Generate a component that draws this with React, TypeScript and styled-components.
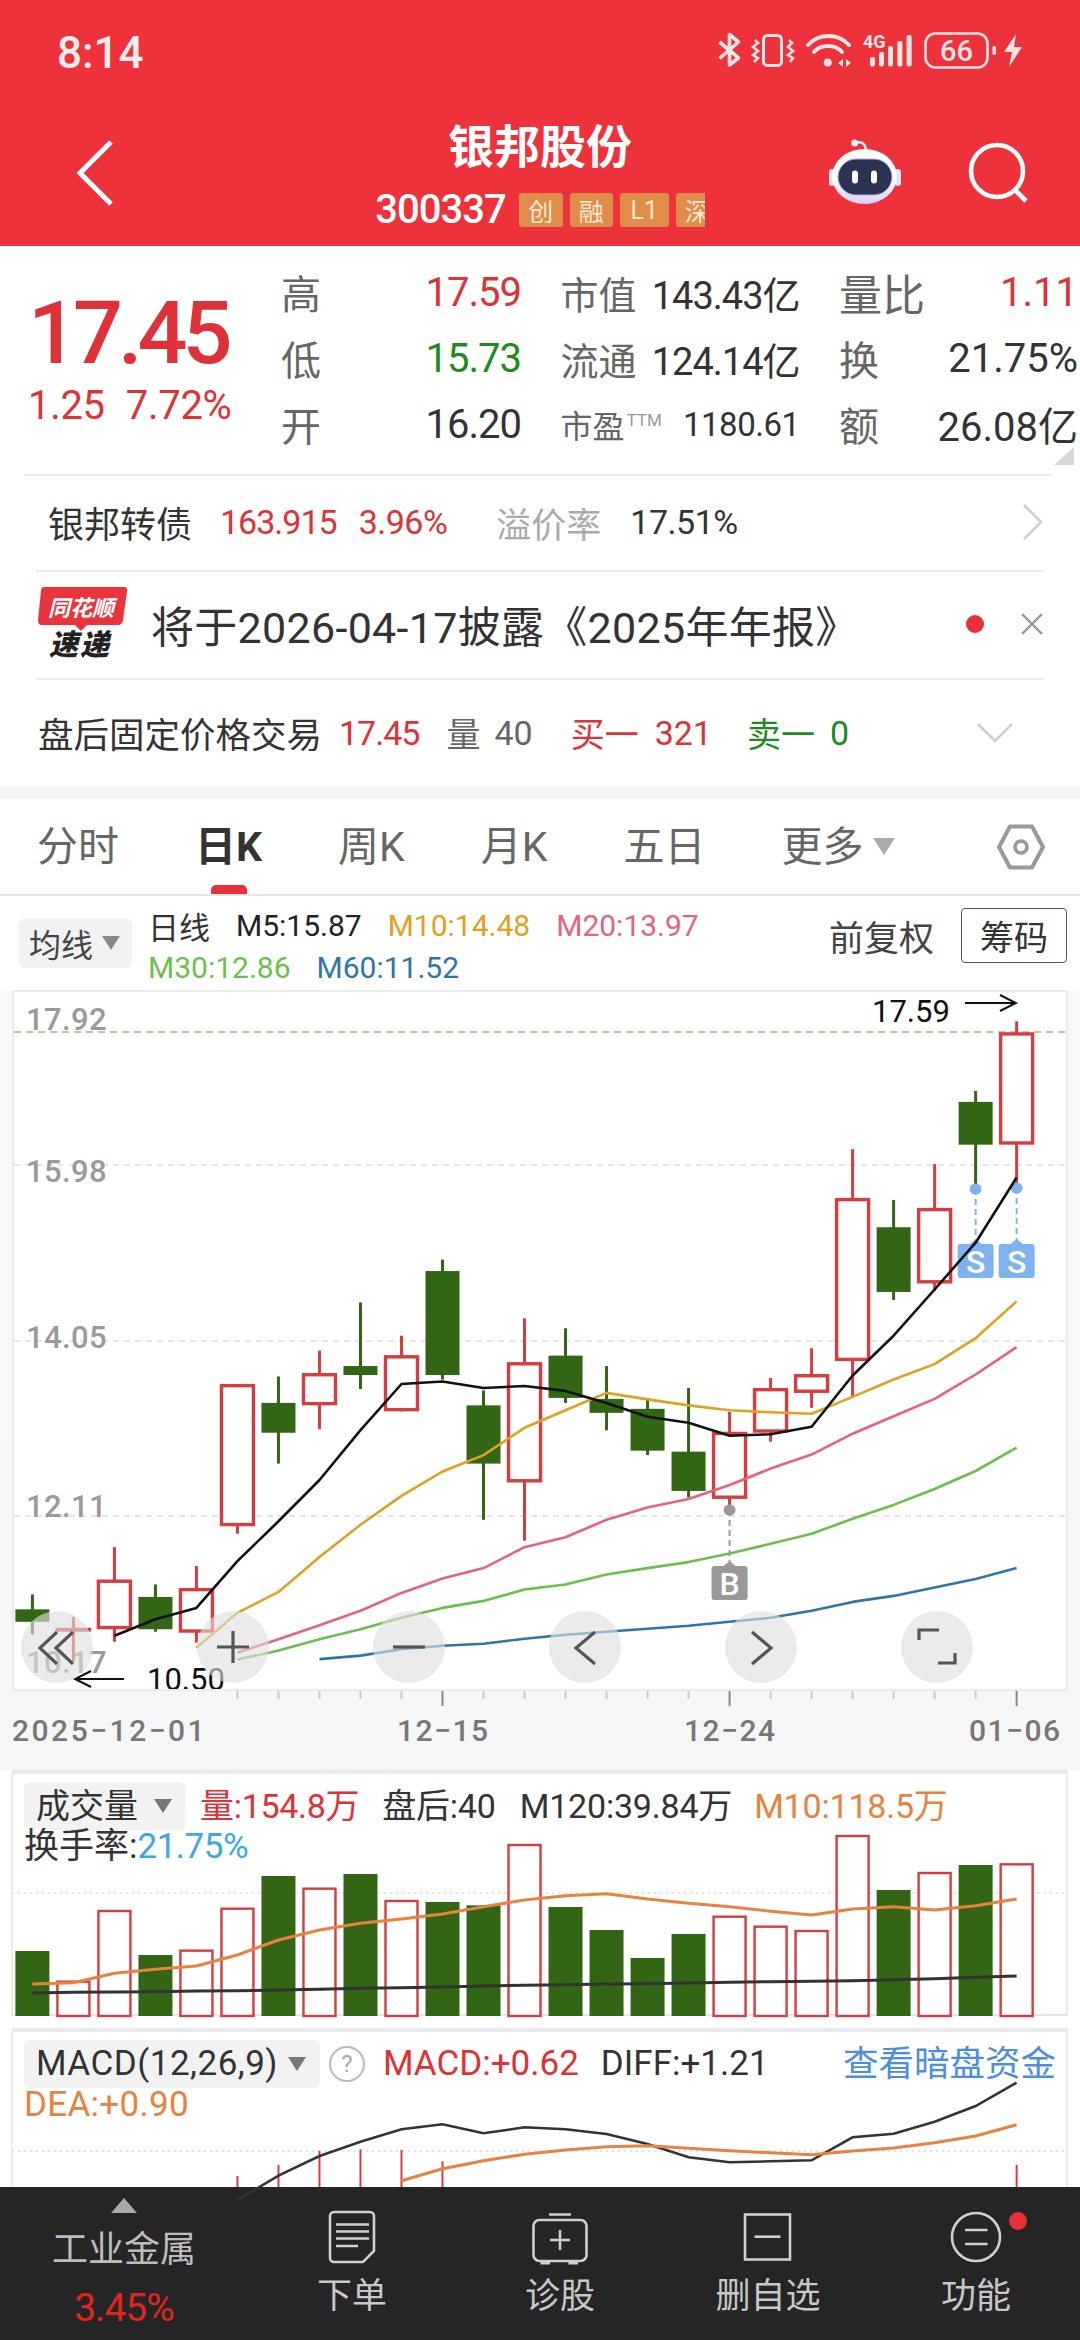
import React from "react";
import styled, { createGlobalStyle } from "styled-components";

const RED = "#DC3238";
const GREEN = "#1C8C1C";
const CANDLE_RED = "#D63C40";
const CANDLE_GREEN = "#336614";

const GlobalStyle = createGlobalStyle`
  html, body { margin: 0; padding: 0; background: #fff; }
  body { font-family: Roboto, "Noto Sans CJK SC", sans-serif; }
`;

const Page = styled.div`
  width: 1080px;
  height: 2340px;
  display: flex;
  flex-direction: column;
  overflow: hidden;
  background: #fff;
  color: #333;
`;

/* header */
const Header = styled.header`
  height: 246px;
  flex: none;
  background: #ee323b;
  color: #fff;
`;
const StatusBar = styled.div`
  height: 102px;
  display: flex;
  justify-content: space-between;
  align-items: flex-start;
  padding: 20px 40px 0 57px;
  box-sizing: border-box;
`;
const Clock = styled.div`
  font-size: 44px;
  line-height: 60px;
  margin-top: 3px;
  font-weight: 500;
  color: #ffecec;
`;
const TitleRow = styled.div`
  height: 144px;
  display: grid;
  grid-template-columns: 250px 1fr 250px;
`;
const BackCell = styled.div`
  display: flex;
  align-items: center;
  padding: 0 0 2px 74px;
`;
const TitleCell = styled.div`
  display: flex;
  flex-direction: column;
  align-items: center;
  padding-top: 16px;
`;
const Title = styled.div`
  font-size: 46px;
  line-height: 58px;
  font-weight: 700;
`;
const SubRow = styled.div`
  display: flex;
  align-items: center;
  margin-top: 14px;
`;
const Code = styled.span`
  font-size: 40px;
  line-height: 40px;
  font-weight: 500;
  margin-right: 13px;
  letter-spacing: -1px;
`;
const Badge = styled.span<{ $w: number; $clip?: boolean }>`
  width: ${(p) => p.$w}px;
  height: 34px;
  margin-right: 7px;
  display: flex;
  align-items: center;
  justify-content: ${(p) => (p.$clip ? "flex-start" : "center")};
  padding-left: ${(p) => (p.$clip ? 9 : 0)}px;
  box-sizing: border-box;
  overflow: hidden;
  background: #e28c49;
  border-radius: ${(p) => (p.$clip ? "3px 0 0 3px" : "3px")};
  color: #fbe9d4;
  font-size: 25px;
  white-space: nowrap;
  flex: none;
  &:last-child { margin-right: 0; }
`;
const HeadActions = styled.div`
  display: flex;
  align-items: center;
  justify-content: flex-end;
  gap: 66px;
  padding: 0 50px 2px 0;
`;

/* generic text run */
const Txt = styled.span<{ $c?: string; $s?: number; $ml?: number; $ls?: number; $w?: number }>`
  color: ${(p) => p.$c ?? "inherit"};
  font-size: ${(p) => p.$s ?? 34}px;
  margin-left: ${(p) => p.$ml ?? 0}px;
  letter-spacing: ${(p) => p.$ls ?? 0}px;
  font-weight: ${(p) => p.$w ?? 400};
  white-space: nowrap;
`;

/* quote block */
const Quote = styled.section`
  height: 228px;
  flex: none;
  display: flex;
  padding-top: 13px;
  box-sizing: border-box;
  margin: 0 27px 0 0;
  position: relative;
`;
const PriceCol = styled.div`
  width: 281px;
  flex: none;
  padding: 28px 0 0 28px;
  box-sizing: border-box;
`;
const BigPrice = styled.div`
  font-size: 88px;
  line-height: 92px;
  font-weight: 500;
  color: ${RED};
  letter-spacing: -5px;
`;
const PriceChange = styled.div`
  display: flex;
  gap: 21px;
  margin-top: 5px;
  font-size: 40px;
  line-height: 44px;
  color: ${RED};
  letter-spacing: -0.3px;
`;
const QuoteGrid = styled.div`
  display: grid;
  grid-template-columns: 240px 239px 239px;
  grid-auto-rows: 66px;
  column-gap: 39.5px;
  flex: none;
`;
const QuoteCell = styled.div`
  display: flex;
  align-items: center;
  justify-content: space-between;
  white-space: nowrap;
`;
const Corner = styled.div`
  position: absolute;
  right: -21px;
  bottom: 9px;
  width: 0;
  height: 0;
  border-left: 20px solid transparent;
  border-bottom: 18px solid #d8d8d8;
`;
const Ttm = styled.sup`
  font-size: 17px;
  color: #999;
  vertical-align: 12px;
  line-height: 0;
  margin-left: 2px;
`;

/* list rows */
const Row = styled.div<{ $h: number; $pl: number; $pr: number; $line?: boolean }>`
  height: ${(p) => p.$h}px;
  flex: none;
  display: flex;
  align-items: center;
  box-sizing: border-box;
  padding: 0 ${(p) => p.$pr}px 0 ${(p) => p.$pl}px;
  position: relative;
  &::before {
    content: "";
    display: ${(p) => (p.$line ? "block" : "none")};
    position: absolute;
    left: ${(p) => (p.$pl > 40 ? 24 : 36)}px;
    right: ${(p) => (p.$pl > 40 ? 27 : 36)}px;
    top: 0;
    height: 2px;
    background: #ececec;
  }
`;
const Push = styled.div`
  margin-left: auto;
  display: flex;
  align-items: center;
`;
const Dot = styled.span`
  width: 18px;
  height: 18px;
  border-radius: 50%;
  background: #e8303a;
  margin-right: 36px;
`;
const Band = styled.div`
  height: 12px;
  flex: none;
  background: #f5f5f5;
`;

/* period tabs */
const Tabs = styled.nav`
  height: 97px;
  flex: none;
  display: flex;
  align-items: center;
  gap: 76px;
  padding: 0 34px 0 37px;
  box-sizing: border-box;
  border-bottom: 2px solid #e6e6e6;
  position: relative;
`;
const Tab = styled.span<{ $active?: boolean }>`
  font-size: 41px;
  line-height: 50px;
  color: ${(p) => (p.$active ? "#333" : "#666")};
  font-weight: ${(p) => (p.$active ? 700 : 400)};
  position: relative;
  display: flex;
  align-items: center;
  white-space: nowrap;
  &::after {
    content: "";
    display: ${(p) => (p.$active ? "block" : "none")};
    position: absolute;
    left: 16px;
    bottom: -22px;
    width: 36px;
    height: 9px;
    border-radius: 5px 5px 0 0;
    background: #e8303a;
  }
`;
const Caret = styled.span<{ $size?: number; $ml?: number; $c?: string }>`
  display: inline-block;
  width: 0;
  height: 0;
  margin-left: ${(p) => p.$ml ?? 8}px;
  border-left: ${(p) => p.$size ?? 10}px solid transparent;
  border-right: ${(p) => p.$size ?? 10}px solid transparent;
  border-top: ${(p) => (p.$size ?? 10) * 1.6}px solid ${(p) => p.$c ?? "#aaa"};
  flex: none;
`;
const UpCaret = styled.span`
  width: 0;
  height: 0;
  border-left: 13px solid transparent;
  border-right: 13px solid transparent;
  border-bottom: 15px solid #aaa;
  flex: none;
`;

/* indicator toolbar */
const Toolbar = styled.div`
  height: 94px;
  flex: none;
  display: flex;
  align-items: flex-start;
  padding: 0 13px 0 19px;
  box-sizing: border-box;
`;
const Picker = styled.div<{ $w: number }>`
  width: ${(p) => p.$w}px;
  height: 50px;
  flex: none;
  display: flex;
  align-items: center;
  justify-content: space-between;
  padding: 0 12px 0 10px;
  box-sizing: border-box;
  margin-top: 22px;
  background: #f2f2f2;
  border-radius: 6px;
  font-size: 32px;
  color: #444;
  white-space: nowrap;
`;
const MaLegend = styled.div`
  margin: 8px 0 0 16px;
  display: flex;
  flex-direction: column;
`;
const MaLine = styled.div`
  display: flex;
  gap: 26px;
  height: 42px;
  align-items: center;
  font-size: 30px;
  white-space: nowrap;
`;
const Adjust = styled.div`
  margin: 12px 0 0 auto;
  display: flex;
  align-items: center;
  gap: 27px;
`;
const ChipBtn = styled.div`
  width: 106px;
  height: 55px;
  display: flex;
  align-items: center;
  justify-content: center;
  border: 1.5px solid #555;
  border-radius: 4px;
  box-sizing: border-box;
  font-size: 34px;
`;

/* charts */
const ChartSection = styled.section`
  height: 780px;
  flex: none;
  position: relative;
  background: linear-gradient(#fafafa, #f6f6f6);
`;
const PlainSvg = styled.svg`
  display: block;
  overflow: visible;
`;
const ChartControls = styled.div`
  position: absolute;
  left: 21px;
  top: 621px;
  display: flex;
  gap: 104px;
`;
const RoundBtn = styled.div`
  width: 72px;
  height: 72px;
  border-radius: 50%;
  background: rgba(222, 222, 222, 0.62);
`;
const SubPanel = styled.section<{ $h: number }>`
  height: ${(p) => p.$h}px;
  flex: none;
  position: relative;
  margin: 0 12px;
  background: #fff;
  border-top: 4px solid #eaeaea;
  box-sizing: border-box;
`;
const PanelLegend = styled.div`
  position: absolute;
  left: 12px;
  top: 8px;
  right: 12px;
`;
const LegendRow = styled.div`
  display: flex;
  align-items: center;
  font-size: 34px;
  line-height: 42px;
  white-space: nowrap;
  & + & { margin-top: -4px; }
`;
const PanelPicker = styled(Picker)`
  margin: 0;
  height: 48px;
  font-size: 34px;
  color: #333;
  padding: 0 14px 0 12px;
`;
const HelpMark = styled.span`
  width: 32px;
  height: 32px;
  margin-left: 9px;
  border: 2px solid #bbb;
  border-radius: 50%;
  display: flex;
  align-items: center;
  justify-content: center;
  font-size: 24px;
  color: #aaa;
  flex: none;
`;

/* bottom bar */
const BottomBar = styled.footer`
  height: 153px;
  flex: none;
  display: grid;
  grid-template-columns: 248px repeat(4, 208px);
  background: #252525;
  color: #c8c8c8;
`;
const SectorCell = styled.div`
  display: flex;
  flex-direction: column;
  align-items: center;
  padding-top: 11px;
  position: relative;
`;
const SectorName = styled.div`
  font-size: 36px;
  line-height: 44px;
  margin-top: 15px;
  color: #bdbdbd;
`;
const SectorPct = styled.div`
  font-size: 39px;
  line-height: 44px;
  margin-top: 14px;
  color: #e0241f;
  letter-spacing: -1px;
`;
const NavItem = styled.div`
  display: flex;
  flex-direction: column;
  align-items: center;
  padding-top: 22px;
  position: relative;
  font-size: 35px;
`;
const NavLabel = styled.div`
  line-height: 44px;
  margin-top: 6px;
`;
const NavDot = styled.span`
  position: absolute;
  left: calc(50% + 33px);
  top: 25px;
  width: 18px;
  height: 18px;
  border-radius: 50%;
  background: #e8303a;
`;

/* chart data: high, body top, body bottom, low */
type Candle = [number, number, number, number, "r" | "g"];
const candles: Candle[] = [
  [1235, 1265, 1290, 1315, "g"],
  [1280, 1302, 1308, 1370, "r"],
  [1140, 1205, 1305, 1330, "r"],
  [1215, 1240, 1305, 1310, "g"],
  [1178, 1222, 1312, 1332, "r"],
  [812, 812, 1098, 1113, "r"],
  [797, 850, 910, 972, "g"],
  [745, 790, 855, 903, "r"],
  [648, 776, 794, 822, "g"],
  [715, 754, 867, 867, "r"],
  [562, 585, 794, 803, "g"],
  [825, 855, 972, 1085, "g"],
  [680, 768, 1010, 1127, "r"],
  [700, 755, 840, 850, "g"],
  [776, 842, 870, 905, "g"],
  [840, 862, 946, 955, "g"],
  [820, 948, 1027, 1040, "g"],
  [868, 908, 1043, 1065, "r"],
  [800, 820, 910, 928, "r"],
  [740, 792, 830, 860, "r"],
  [340, 438, 766, 838, "r"],
  [442, 497, 627, 643, "g"],
  [370, 458, 610, 625, "r"],
  [223, 245, 331, 420, "g"],
  [83, 105, 331, 415, "r"],
];

const cx = (i: number) => 32.4 + 41.01 * i;
const py = (v: number) => 980 + v / 2.01;
const series = (start: number, ys: number[], toY: (v: number) => number) =>
  ys.map((v, i) => `${cx(start + i).toFixed(1)},${toY(v).toFixed(1)}`).join(" ");

const maLines: { color: string; start: number; ys: number[] }[] = [
  {
    color: "#6CBF4B",
    start: 5,
    ys: [1366, 1348, 1325, 1305, 1282, 1262, 1248, 1225, 1215, 1195, 1182, 1170, 1153, 1133, 1113, 1083, 1055, 1023, 987, 940],
  },
  {
    color: "#2F76A8",
    start: 7,
    ys: [1365, 1358, 1345, 1338, 1334, 1324, 1316, 1310, 1304, 1298, 1290, 1282, 1268, 1250, 1238, 1221, 1204, 1182],
  },
  {
    color: "#E8637A",
    start: 5,
    ys: [1352, 1325, 1297, 1268, 1232, 1203, 1182, 1140, 1120, 1085, 1060, 1043, 1015, 982, 954, 912, 877, 842, 793, 738],
  },
  {
    color: "#E0A020",
    start: 4,
    ys: [1342, 1272, 1230, 1160, 1095, 1037, 988, 955, 900, 865, 830, 843, 855, 865, 869, 872, 838, 803, 772, 720, 646],
  },
  {
    color: "#111",
    start: 2,
    ys: [1318, 1285, 1262, 1168, 1088, 1005, 905, 812, 807, 820, 816, 826, 850, 878, 890, 916, 913, 898, 795, 715, 622, 528, 397],
  },
];

const Marker = ({ i, dotY, top, label, color }: { i: number; dotY: number; top: number; label: string; color: string }) => {
  const x = cx(i);
  return (
    <g>
      <ellipse cx={x} cy={dotY} rx={6} ry={5.5} fill={color} />
      <line x1={x} x2={x} y1={dotY} y2={top - 4} stroke={color} strokeWidth={2} strokeDasharray="6 4" />
      <path d={`M${x - 6} ${top}L${x} ${top - 5}L${x + 6} ${top}Z`} fill={color} />
      <rect x={x - 18} y={top} width={36} height={34} rx={3} fill={color} />
      <text x={x} y={top + 29} textAnchor="middle" fontSize={32} fontWeight={500} fill="#fff">
        {label}
      </text>
    </g>
  );
};

const axisLabels: [string, number][] = [
  ["17.92", 1030],
  ["15.98", 1182],
  ["14.05", 1348],
  ["12.11", 1517],
  ["10.17", 1673],
];

const PriceChart = () => (
  <PlainSvg width={1080} height={780} viewBox="0 990 1080 780" fontFamily="Roboto, sans-serif">
    <defs>
      <clipPath id="plot">
        <rect x={12} y={990} width={1056} height={699} />
      </clipPath>
    </defs>
    <rect x={13} y={991} width={1054} height={699} fill="#fff" stroke="#ebebeb" strokeWidth={2} />
    <g strokeWidth={1.5} strokeDasharray="6 5" stroke="#dedede">
      <line x1={14} x2={1066} y1={1165} y2={1165} />
      <line x1={14} x2={1066} y1={1341} y2={1341} />
      <line x1={14} x2={1066} y1={1516} y2={1516} />
    </g>
    <line x1={14} x2={1066} y1={1032} y2={1032} stroke="#c8a878" strokeWidth={1.5} strokeDasharray="7 5" />
    {axisLabels.map(([label, y]) => (
      <text key={label} x={26} y={y} fontSize={31} fontWeight={500} fill="#9a9a9a" letterSpacing={0.4}>
        {label}
      </text>
    ))}
    {candles.map(([high, top, bottom, low, kind], i) => {
      const x = cx(i);
      const color = kind === "r" ? CANDLE_RED : CANDLE_GREEN;
      return (
        <g key={i}>
          <line x1={x} x2={x} y1={py(high)} y2={py(low)} stroke={color} strokeWidth={3} />
          {kind === "r" ? (
            <rect x={x - 16} y={py(top) + 1.7} width={32} height={Math.max(py(bottom) - py(top) - 3.4, 0.5)} fill="#fff" stroke={color} strokeWidth={3.4} />
          ) : (
            <rect x={x - 17} y={py(top)} width={34} height={py(bottom) - py(top)} fill={color} />
          )}
        </g>
      );
    })}
    <Marker i={17} dotY={1510} top={1566} label="B" color="#999" />
    <Marker i={23} dotY={1189} top={1244} label="S" color="#7FB3EE" />
    <Marker i={24} dotY={1188} top={1244} label="S" color="#7FB3EE" />
    {maLines.map((m) => (
      <polyline key={m.color} points={series(m.start, m.ys, py)} fill="none" stroke={m.color} strokeWidth={2.6} strokeLinejoin="round" />
    ))}
    <text x={872} y={1022} fontSize={31} fill="#111">
      17.59
    </text>
    <path d="M965 1003H1016M1000 995L1016 1003L1000 1011" fill="none" stroke="#111" strokeWidth={2} />
    <g clipPath="url(#plot)">
      <text x={147} y={1690} fontSize={31} fill="#111">
        10.50
      </text>
    </g>
    <path d="M124 1679H75M91 1671L75 1679L91 1687" fill="none" stroke="#111" strokeWidth={2} />
    {candles.map((_, i) =>
      i < 5 ? null : (
        <line
          key={i}
          x1={cx(i)}
          x2={cx(i)}
          y1={1691}
          y2={i === 10 || i === 17 || i === 24 ? 1706 : 1699}
          stroke={i === 10 || i === 17 || i === 24 ? "#888" : "#ccc"}
          strokeWidth={2}
        />
      )
    )}
    <g fontSize={30} fontWeight={500} fill="#777" letterSpacing={1.5}>
      <text x={12} y={1741} letterSpacing={2.5}>
        2025−12−01
      </text>
      <text x={397} y={1741}>
        12−15
      </text>
      <text x={684} y={1741}>
        12−24
      </text>
      <text x={969} y={1741}>
        01−06
      </text>
    </g>
  </PlainSvg>
);

const volumes: [number, "r" | "g"][] = [
  [603, "g"], [692, "r"], [480, "r"], [615, "g"], [599, "r"], [473, "r"], [378, "g"], [413, "r"], [372, "g"],
  [450, "r"], [456, "g"], [466, "g"], [282, "r"], [471, "g"], [540, "g"], [624, "g"], [552, "g"], [497, "r"],
  [527, "r"], [540, "r"], [255, "r"], [420, "g"], [366, "r"], [345, "g"], [340, "r"],
];
const volY = (v: number) => 1750 + v / 3;
const volAvg10 = [702, 698, 670, 658, 648, 615, 570, 540, 520, 507, 492, 470, 450, 437, 431, 447, 460, 470, 484, 495, 477, 470, 480, 467, 447];
const volAvg120 = [729, 727, 726, 725, 723, 722, 720, 718, 715, 713, 711, 708, 706, 704, 702, 701, 699, 697, 695, 694, 692, 689, 686, 682, 678];

const VolumeChart = () => (
  <PlainSvg width={1056} height={254} viewBox="12 1774 1056 254">
    <line x1={12} x2={12} y1={1774} y2={2016} stroke="#ececec" strokeWidth={2} />
    <line x1={1067} x2={1067} y1={1774} y2={2016} stroke="#ececec" strokeWidth={2} />
    <line x1={12} x2={1068} y1={2015} y2={2015} stroke="#e6e6e6" strokeWidth={2} />
    <line x1={12} x2={1068} y1={1893} y2={1893} stroke="#dcdcdc" strokeWidth={1.5} strokeDasharray="2 4" />
    {volumes.map(([top, kind], i) => {
      const x = cx(i);
      const y = volY(top);
      return kind === "r" ? (
        <rect key={i} x={x - 16} y={y + 1} width={32} height={2015 - y} fill="#fff" stroke={CANDLE_RED} strokeWidth={2.4} />
      ) : (
        <rect key={i} x={x - 17} y={y} width={34} height={2016 - y} fill={CANDLE_GREEN} />
      );
    })}
    <polyline points={series(0, volAvg120, volY)} fill="none" stroke="#333" strokeWidth={3} />
    <polyline points={series(0, volAvg10, volY)} fill="none" stroke="#E8823F" strokeWidth={3} strokeLinejoin="round" />
  </PlainSvg>
);

const macdY = (v: number) => 2020 + v / 3;
const diffLine = [540, 467, 408, 365, 328, 313, 340, 322, 328, 342, 372, 412, 427, 424, 421, 352, 341, 305, 258, 188];
const deaLine = [482, 446, 422, 403, 390, 380, 377, 385, 392, 398, 404, 393, 384, 368, 348, 314];
const macdBars: [number, number][] = [[5, 468], [6, 435], [7, 393], [8, 388], [9, 390], [10, 424], [24, 435]];

const MacdChart = () => (
  <PlainSvg width={1056} height={155} viewBox="12 2032 1056 155">
    <line x1={12} x2={12} y1={2032} y2={2187} stroke="#ececec" strokeWidth={2} />
    <line x1={1067} x2={1067} y1={2032} y2={2187} stroke="#ececec" strokeWidth={2} />
    <line x1={12} x2={1068} y1={2151} y2={2151} stroke="#dcdcdc" strokeWidth={1.5} strokeDasharray="2 4" />
    {macdBars.map(([i, top]) => (
      <line key={i} x1={cx(i)} x2={cx(i)} y1={macdY(top)} y2={2187} stroke={CANDLE_RED} strokeWidth={2} />
    ))}
    <polyline points={series(5, diffLine.slice(0), macdY)} fill="none" stroke="#333" strokeWidth={2.5} />
    <polyline points={series(9, deaLine, macdY)} fill="none" stroke="#E8823F" strokeWidth={3} />
  </PlainSvg>
);

/* icons */
const StatusIcons = () => (
  <PlainSvg width={340} height={60} viewBox="0 0 340 60" fill="none" stroke="#ffe4e4" fontFamily="Roboto, sans-serif">
    <path d="M19.5 22L38.5 38L29.5 45V14.5L38.5 22L19.5 38.5" strokeWidth={3.6} strokeLinejoin="round" />
    <rect x={63.5} y={15.5} width={18} height={30} rx={4} strokeWidth={3} />
    <path d="M55 20L58 23L53 27L58 31L53 35L58 38L54 42" strokeWidth={2.6} />
    <path d="M89 20L92 23L88 27L93 31L88 35L93 38L90 42" strokeWidth={2.6} />
    <path d="M108 25C119 13 138 13 149 25" strokeWidth={4} strokeLinecap="round" />
    <path d="M114 32C121 24 135 24 142 32" strokeWidth={4} strokeLinecap="round" />
    <circle cx={127.7} cy={42.5} r={4} fill="#ffe4e4" stroke="none" />
    <path d="M143 39L138 43L143 47ZM146 39L151 43L146 47Z" fill="#ffe4e4" stroke="none" />
    <text x={163} y={28} fontSize={18} fontWeight={700} fill="#ffe4e4" stroke="none">
      4G
    </text>
    {[
      [170, 37],
      [179, 32],
      [188, 26],
      [197.4, 21],
      [206.6, 15],
    ].map(([x, y]) => (
      <rect key={x} x={x} y={y} width={5} height={46.5 - y} rx={2} fill="#ffe4e4" stroke="none" />
    ))}
    <rect x={225.5} y={13.5} width={62} height={34} rx={10} strokeWidth={2.6} />
    <text x={256.5} y={41} textAnchor="middle" fontSize={29} fontWeight={500} fill="#ffe4e4" stroke="none">
      66
    </text>
    <rect x={292.5} y={26} width={3.5} height={9} rx={1.5} fill="#ffe4e4" stroke="none" />
    <path d="M316 14L304 32H312L309 47L322 27H314Z" fill="#ffe4e4" stroke="none" />
  </PlainSvg>
);

const BackIcon = () => (
  <PlainSvg width={44} height={70} viewBox="0 0 44 70" fill="none" stroke="#fff" strokeWidth={5}>
    <path d="M37 4L6 35L37 66" />
  </PlainSvg>
);

const RobotIcon = () => (
  <PlainSvg width={74} height={76} viewBox="0 0 74 76">
    <defs>
      <linearGradient id="robotHead" x1="0" y1="0" x2="0" y2="1">
        <stop offset="0.5" stopColor="#ffffff" />
        <stop offset="1" stopColor="#d9d2f3" />
      </linearGradient>
    </defs>
    <path d="M27 8Q36 5 38 14" fill="none" stroke="#f4eef8" strokeWidth={2.5} />
    <circle cx={26.7} cy={8} r={3.6} fill="#f4eef8" />
    <rect x={1} y={34} width={6} height={17} rx={3} fill="#e6e2f5" />
    <rect x={67} y={34} width={6} height={17} rx={3} fill="#e6e2f5" />
    <ellipse cx={36.5} cy={41.5} rx={32.5} ry={27.5} fill="url(#robotHead)" />
    <rect x={10} y={24} width={54} height={36} rx={18} fill="#2a3352" stroke="#b7a8ec" strokeWidth={1} />
    <rect x={24} y={35.5} width={6} height={13} rx={3} fill="#fff" />
    <rect x={43} y={35.5} width={6} height={13} rx={3} fill="#fff" />
  </PlainSvg>
);

const SearchIcon = () => (
  <PlainSvg width={62} height={62} viewBox="0 0 62 62" fill="none" stroke="#fff" strokeWidth={4.6}>
    <circle cx={29} cy={29} r={26} />
    <path d="M47 48L58 59" />
  </PlainSvg>
);

const Chevron = ({ d, w, h }: { d: string; w: number; h: number }) => (
  <PlainSvg width={w} height={h} viewBox={`0 0 ${w} ${h}`} fill="none" stroke="#cfcfcf" strokeWidth={2.6}>
    <path d={d} />
  </PlainSvg>
);

const NewsLogo = () => (
  <PlainSvg width={90} height={74} viewBox="0 0 90 74">
    <path d="M6 0H86Q90 0 89 4L85 33Q84 38 80 38H49L43 44L37 38H4Q0 38 0 33L3 4Q3 0 6 0Z" fill="#e8343a" />
    <text x={43} y={29} textAnchor="middle" fontSize={22} fontWeight={700} fontStyle="italic" fill="#fff" fontFamily='"Noto Sans CJK SC", sans-serif'>
      同花顺
    </text>
    <text x={42} y={68} textAnchor="middle" fontSize={29} fontWeight={900} fontStyle="italic" fill="#222" letterSpacing={2} fontFamily='"Noto Sans CJK SC", sans-serif'>
      速递
    </text>
  </PlainSvg>
);

const HexIcon = () => (
  <PlainSvg width={50} height={46} viewBox="0 0 50 46" fill="none" stroke="#999" strokeWidth={4} strokeLinejoin="round">
    <path d="M14 2.5H36L47 23L36 43.5H14L3 23Z" />
    <circle cx={25} cy={23} r={6} strokeWidth={3.6} />
  </PlainSvg>
);

const CtlIcon = ({ d }: { d: string }) => (
  <PlainSvg width={72} height={72} viewBox="0 0 72 72" fill="none" stroke="#555" strokeWidth={3.2}>
    <path d={d} />
  </PlainSvg>
);

const NavIcon = ({ children }: { children: React.ReactNode }) => (
  <PlainSvg width={60} height={60} viewBox="0 0 60 60" fill="none" stroke="#cfcfcf" strokeWidth={2.6}>
    {children}
  </PlainSvg>
);

const App = () => (
  <Page>
    <GlobalStyle />
    <Header>
      <StatusBar>
        <Clock>8:14</Clock>
        <StatusIcons />
      </StatusBar>
      <TitleRow>
        <BackCell>
          <BackIcon />
        </BackCell>
        <TitleCell>
          <Title>银邦股份</Title>
          <SubRow>
            <Code>300337</Code>
            <Badge $w={44}>创</Badge>
            <Badge $w={43}>融</Badge>
            <Badge $w={49}>L1</Badge>
            <Badge $w={29} $clip>
              深
            </Badge>
          </SubRow>
        </TitleCell>
        <HeadActions>
          <RobotIcon />
          <SearchIcon />
        </HeadActions>
      </TitleRow>
    </Header>

    <Quote>
      <PriceCol>
        <BigPrice>17.45</BigPrice>
        <PriceChange>
          <span>1.25</span>
          <span>7.72%</span>
        </PriceChange>
      </PriceCol>
      <QuoteGrid>
        <QuoteCell>
          <Txt $s={40} $c="#666">高</Txt>
          <Txt $s={40} $c={RED} $ls={-1}>17.59</Txt>
        </QuoteCell>
        <QuoteCell>
          <Txt $s={38} $c="#666">市值</Txt>
          <Txt $s={38} $ls={-1}>143.43亿</Txt>
        </QuoteCell>
        <QuoteCell>
          <Txt $s={43} $c="#666">量比</Txt>
          <Txt $s={40} $c={RED}>1.11</Txt>
        </QuoteCell>
        <QuoteCell>
          <Txt $s={40} $c="#666">低</Txt>
          <Txt $s={40} $c={GREEN} $ls={-1}>15.73</Txt>
        </QuoteCell>
        <QuoteCell>
          <Txt $s={38} $c="#666">流通</Txt>
          <Txt $s={38} $ls={-1}>124.14亿</Txt>
        </QuoteCell>
        <QuoteCell>
          <Txt $s={40} $c="#666">换</Txt>
          <Txt $s={40}>21.75%</Txt>
        </QuoteCell>
        <QuoteCell>
          <Txt $s={40} $c="#666">开</Txt>
          <Txt $s={40} $ls={-1}>16.20</Txt>
        </QuoteCell>
        <QuoteCell>
          <span>
            <Txt $s={32} $c="#666">市盈</Txt>
            <Ttm>TTM</Ttm>
          </span>
          <Txt $s={33} $ls={-0.5}>1180.61</Txt>
        </QuoteCell>
        <QuoteCell>
          <Txt $s={40} $c="#666">额</Txt>
          <Txt $s={40}>26.08亿</Txt>
        </QuoteCell>
      </QuoteGrid>
      <Corner />
    </Quote>

    <Row $h={96} $pl={48} $pr={36} $line>
      <Txt $s={36}>银邦转债</Txt>
      <Txt $s={34} $c={RED} $ml={28} $ls={-1}>163.915</Txt>
      <Txt $s={34} $c={RED} $ml={22} $ls={-0.5}>3.96%</Txt>
      <Txt $s={35} $c="#aaa" $ml={49}>溢价率</Txt>
      <Txt $s={34} $ml={29} $ls={-0.5}>17.51%</Txt>
      <Push>
        <Chevron w={22} h={38} d="M2 2L19 19L2 36" />
      </Push>
    </Row>
    <Row $h={108} $pl={38} $pr={36} $line>
      <NewsLogo />
      <Txt $s={43} $ml={23} $ls={0.3}>将于2026-04-17披露《2025年年报》</Txt>
      <Push>
        <Dot />
        <PlainSvg width={24} height={24} viewBox="0 0 24 24" stroke="#999" strokeWidth={2.4}>
          <path d="M2 2L22 22M22 2L2 22" />
        </PlainSvg>
      </Push>
    </Row>
    <Row $h={109} $pl={38} $pr={66} $line>
      <Txt $s={35.5}>盘后固定价格交易</Txt>
      <Txt $s={34} $c={RED} $ml={17} $ls={-1}>17.45</Txt>
      <Txt $s={34} $c="#666" $ml={27}>量</Txt>
      <Txt $s={34} $c="#666" $ml={14}>40</Txt>
      <Txt $s={34} $c={RED} $ml={38}>买一</Txt>
      <Txt $s={34} $c={RED} $ml={16}>321</Txt>
      <Txt $s={34} $c={GREEN} $ml={35}>卖一</Txt>
      <Txt $s={34} $c={GREEN} $ml={15}>0</Txt>
      <Push>
        <Chevron w={38} h={22} d="M2 2L19 19L36 2" />
      </Push>
    </Row>
    <Band />

    <Tabs>
      <Tab>分时</Tab>
      <Tab $active>日K</Tab>
      <Tab>周K</Tab>
      <Tab>月K</Tab>
      <Tab>五日</Tab>
      <Tab>
        更多
        <Caret $size={11} $ml={9} />
      </Tab>
      <Push>
        <HexIcon />
      </Push>
    </Tabs>

    <Toolbar>
      <Picker $w={113}>
        均线
        <Caret $size={9} $c="#888" />
      </Picker>
      <MaLegend>
        <MaLine>
          <Txt $s={31} $c="#333">日线</Txt>
          <Txt $s={30} $c="#222">M5:15.87</Txt>
          <Txt $s={30} $c="#E0A020">M10:14.48</Txt>
          <Txt $s={30} $c="#E8637A">M20:13.97</Txt>
        </MaLine>
        <MaLine>
          <Txt $s={30} $c="#6CBF4B">M30:12.86</Txt>
          <Txt $s={30} $c="#2F76A8">M60:11.52</Txt>
        </MaLine>
      </MaLegend>
      <Adjust>
        <Txt $s={35} $c="#444">前复权</Txt>
        <ChipBtn>筹码</ChipBtn>
      </Adjust>
    </Toolbar>

    <ChartSection>
      <PriceChart />
      <ChartControls>
        <RoundBtn>
          <CtlIcon d="M36 21L19 37L36 53M52 21L35 37L52 53" />
        </RoundBtn>
        <RoundBtn>
          <CtlIcon d="M20 36H52M36 20V52" />
        </RoundBtn>
        <RoundBtn>
          <CtlIcon d="M20 36H52" />
        </RoundBtn>
        <RoundBtn>
          <CtlIcon d="M46 21L27 37L46 53" />
        </RoundBtn>
        <RoundBtn>
          <CtlIcon d="M27 21L46 37L27 53" />
        </RoundBtn>
        <RoundBtn>
          <CtlIcon d="M18 29V19H38M54 42V52H37" />
        </RoundBtn>
      </ChartControls>
    </ChartSection>

    <SubPanel $h={258}>
      <VolumeChart />
      <PanelLegend>
        <LegendRow>
          <PanelPicker $w={162}>
            成交量
            <Caret $size={9} $c="#777" />
          </PanelPicker>
          <Txt $c={RED} $ml={14} $ls={-0.3}>量:154.8万</Txt>
          <Txt $c="#333" $ml={23} $ls={-0.2}>盘后:40</Txt>
          <Txt $c="#333" $ml={24} $ls={-0.2}>M120:39.84万</Txt>
          <Txt $c="#E8823F" $ml={22} $ls={-0.2}>M10:118.5万</Txt>
        </LegendRow>
        <LegendRow>
          <Txt $s={35} $c="#333">换手率:</Txt>
          <Txt $s={35} $c="#3DA6E8" $ls={-0.5}>21.75%</Txt>
        </LegendRow>
      </PanelLegend>
    </SubPanel>

    <SubPanel $h={159}>
      <MacdChart />
      <PanelLegend>
        <LegendRow>
          <PanelPicker $w={296}>
            <Txt $s={35} $ls={0.5}>MACD(12,26,9)</Txt>
            <Caret $size={9} $c="#777" />
          </PanelPicker>
          <HelpMark>?</HelpMark>
          <Txt $s={35} $c={RED} $ml={18}>MACD:+0.62</Txt>
          <Txt $s={35} $c="#333" $ml={22}>DIFF:+1.21</Txt>
          <Push>
            <Txt $s={35.5} $c="#4A8FDC">查看暗盘资金</Txt>
          </Push>
        </LegendRow>
        <LegendRow>
          <Txt $s={35} $c="#E8823F" $ls={0.3}>DEA:+0.90</Txt>
        </LegendRow>
      </PanelLegend>
    </SubPanel>

    <BottomBar>
      <SectorCell>
        <UpCaret />
        <SectorName>工业金属</SectorName>
        <SectorPct>3.45%</SectorPct>
      </SectorCell>
      <NavItem>
        <NavIcon>
          <path d="M12 3H48a4 4 0 0 1 4 4V42L41 53H12a4 4 0 0 1-4-4V7a4 4 0 0 1 4-4Z" />
          <path d="M14 15.5H47M14 22.5H47M14 29.5H47M14 37H36" />
        </NavIcon>
        <NavLabel>下单</NavLabel>
      </NavItem>
      <NavItem>
        <NavIcon>
          <rect x={3.5} y={11} width={53} height={41} rx={6} />
          <path d="M19 5.5H41M20 31H40M30 21V41" />
          <path d="M10.5 52H20V55.5H10.5ZM38.5 52H48V55.5H38.5Z" fill="#cfcfcf" stroke="none" />
        </NavIcon>
        <NavLabel>诊股</NavLabel>
      </NavItem>
      <NavItem>
        <NavIcon>
          <rect x={7} y={5.5} width={45} height={45} />
          <path d="M16.5 27.7H42.5" />
        </NavIcon>
        <NavLabel>删自选</NavLabel>
      </NavItem>
      <NavItem>
        <NavIcon>
          <circle cx={30} cy={28} r={24} />
          <path d="M19 21H41.5M19 35H41.5" />
        </NavIcon>
        <NavLabel>功能</NavLabel>
        <NavDot />
      </NavItem>
    </BottomBar>
  </Page>
);

export default App;
